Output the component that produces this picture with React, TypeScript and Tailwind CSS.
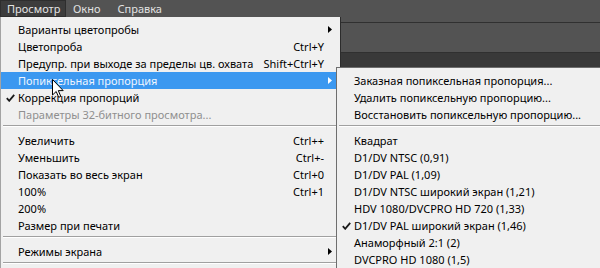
import React from "react";

const font = { fontFamily: '"Noto Sans", "Open Sans", sans-serif' };

function Arrow({ white }: { white?: boolean }) {
  return (
    <svg width="4" height="7" viewBox="0 0 4 7" className="block">
      <path d="M0 0 L4 3.5 L0 7 Z" fill={white ? "#ffffff" : "#000000"} />
    </svg>
  );
}

function Check() {
  return (
    <svg width="9" height="8" viewBox="0 0 9 8" className="block">
      <path d="M0.8 4.2 L3.2 6.8 L8.2 0.8" stroke="#1a1a1a" strokeWidth="1.8" fill="none" />
    </svg>
  );
}

type Item =
  | { sep: true }
  | { sep?: false; label: string; shortcut?: string; sub?: boolean; check?: boolean; disabled?: boolean; active?: boolean };

const leftItems: Item[] = [
  { label: "Варианты цветопробы", sub: true },
  { label: "Цветопроба", shortcut: "Ctrl+Y" },
  { label: "Предупр. при выходе за пределы цв. охвата", shortcut: "Shift+Ctrl+Y" },
  { label: "Попиксельная пропорция", sub: true, active: true },
  { label: "Коррекция пропорций", check: true },
  { label: "Параметры 32-битного просмотра...", disabled: true },
  { sep: true },
  { label: "Увеличить", shortcut: "Ctrl++" },
  { label: "Уменьшить", shortcut: "Ctrl+-" },
  { label: "Показать во весь экран", shortcut: "Ctrl+0" },
  { label: "100%", shortcut: "Ctrl+1" },
  { label: "200%" },
  { label: "Размер при печати" },
  { sep: true },
  { label: "Режимы экрана", sub: true },
  { sep: true },
];

const rightItems: Item[] = [
  { label: "Заказная попиксельная пропорция..." },
  { label: "Удалить попиксельную пропорцию..." },
  { label: "Восстановить попиксельную пропорцию..." },
  { sep: true },
  { label: "Квадрат" },
  { label: "D1/DV NTSC (0,91)" },
  { label: "D1/DV PAL (1,09)" },
  { label: "D1/DV NTSC широкий экран (1,21)" },
  { label: "HDV 1080/DVCPRO HD 720 (1,33)" },
  { label: "D1/DV PAL широкий экран (1,46)", check: true },
  { label: "Анаморфный 2:1 (2)" },
  { label: "DVCPRO HD 1080 (1,5)" },
];

function Separator() {
  return (
    <div className="h-[9px] pt-[2px] px-[2px]">
      <div className="h-[2px] border-t border-[#a0a0a0] border-b border-b-white" />
    </div>
  );
}

function Row({ it }: { it: Exclude<Item, { sep: true }> }) {
  const color = it.active ? "text-[#eef5ff]" : it.disabled ? "text-[#8f8f8f]" : "text-black";
  return (
    <div className={`flex items-center h-[17px] ${it.active ? "bg-[#3b98f0]" : ""} ${color}`}>
      <div className="w-[17px] flex justify-center items-center pl-[1px]">{it.check ? <Check /> : null}</div>
      <div className="flex-1 whitespace-nowrap">{it.label}</div>
      {it.shortcut ? <div className="whitespace-nowrap">{it.shortcut}</div> : null}
      <div className="w-[16px] pl-[4px] flex items-center">{it.sub ? <Arrow white={it.active} /> : null}</div>
    </div>
  );
}

function Cursor() {
  return (
    <svg width="12" height="19" viewBox="0 0 12 19" className="absolute left-[52px] top-[79px]">
      <path
        d="M0.5 0.5 L0.5 16 L4.2 12.5 L6.7 18.3 L8.8 17.4 L6.3 11.6 L11.2 11.6 Z"
        fill="#ffffff"
        stroke="#000000"
        strokeWidth="1"
        strokeLinejoin="round"
      />
    </svg>
  );
}

export default function App() {
  return (
    <div className="relative w-[600px] h-[268px] overflow-hidden bg-[#393939] text-[11px] leading-[17px]" style={font}>
      {/* background: menubar and panel strip */}
      <div className="h-[22px] bg-[#535353] flex items-start text-[#e2e2e2] text-[11px]">
        <div className="h-[17px] w-[66px] bg-[#3c3c3c] border border-[#2e2e2e] flex items-center pl-[6px]">Просмотр</div>
        <div className="h-[17px] flex items-center ml-[7px]">Окно</div>
        <div className="h-[17px] flex items-center ml-[17px]">Справка</div>
      </div>
      <div className="h-[31px] bg-[#535353] border-t border-b border-[#303030]" />

      {/* main dropdown */}
      <div className="absolute left-0 top-[17px] w-[341px] h-[260px] bg-[#f0f0f0] border-l border-[#a3a3a3] border-r border-r-[#2c2c2c] pt-[4px]">
        {leftItems.map((it, i) => (it.sep ? <Separator key={i} /> : <Row key={i} it={it} />))}
      </div>

      {/* submenu */}
      <div className="absolute left-[336px] top-[67px] w-[280px] h-[210px] bg-[#f0f0f0] border-l border-t border-[#6e6e6e] pt-[4px]">
        {rightItems.map((it, i) => (it.sep ? <Separator key={i} /> : <Row key={i} it={it} />))}
      </div>

      <Cursor />
    </div>
  );
}
